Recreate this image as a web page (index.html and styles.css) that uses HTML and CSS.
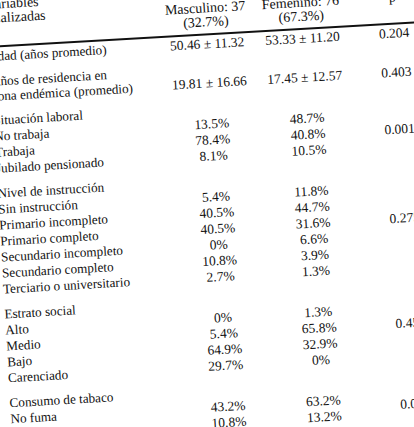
FILE: index.html
```html
<!DOCTYPE html>
<html>
<head>
  <meta charset="utf-8">
  <title>Variables analizadas por sexo</title>
  <link rel="stylesheet" href="styles.css">
</head>
<body>
  <div class="sheet">
    <div class="row head">
      <div class="label">Variables<br>analizadas</div>
      <div class="col">Masculino: 37<br>(32.7%)</div>
      <div class="col">Femenino: 76<br>(67.3%)</div>
      <div class="pcol">p</div>
    </div>

    <div class="row group first">
      <div class="label">Edad (años promedio)</div>
      <div class="col num">50.46 ± 11.32</div>
      <div class="col num">53.33 ± 11.20</div>
      <div class="pcol num">0.204</div>
    </div>

    <div class="row group two-line">
      <div class="label">Años de residencia en<br>zona endémica (promedio)</div>
      <div class="col num">19.81 ± 16.66</div>
      <div class="col num">17.45 ± 12.57</div>
      <div class="pcol num">0.403</div>
    </div>

    <div class="row group">
      <div class="label">
        <span>Situación laboral</span>
        <span>No trabaja</span>
        <span>Trabaja</span>
        <span>Jubilado pensionado</span>
      </div>
      <div class="col num list">
        <span>13.5%</span>
        <span>78.4%</span>
        <span>8.1%</span>
      </div>
      <div class="col num list">
        <span>48.7%</span>
        <span>40.8%</span>
        <span>10.5%</span>
      </div>
      <div class="pcol num low">0.0017</div>
    </div>

    <div class="row group">
      <div class="label">
        <span>Nivel de instrucción</span>
        <span>Sin instrucción</span>
        <span>Primario incompleto</span>
        <span>Primario completo</span>
        <span>Secundario incompleto</span>
        <span>Secundario completo</span>
        <span>Terciario o universitario</span>
      </div>
      <div class="col num list">
        <span>5.4%</span>
        <span>40.5%</span>
        <span>40.5%</span>
        <span>0%</span>
        <span>10.8%</span>
        <span>2.7%</span>
      </div>
      <div class="col num list">
        <span>11.8%</span>
        <span>44.7%</span>
        <span>31.6%</span>
        <span>6.6%</span>
        <span>3.9%</span>
        <span>1.3%</span>
      </div>
      <div class="pcol num">0.275</div>
    </div>

    <div class="row group">
      <div class="label">
        <span>Estrato social</span>
        <span>Alto</span>
        <span>Medio</span>
        <span>Bajo</span>
        <span>Carenciado</span>
      </div>
      <div class="col num list">
        <span>0%</span>
        <span>5.4%</span>
        <span>64.9%</span>
        <span>29.7%</span>
      </div>
      <div class="col num list">
        <span>1.3%</span>
        <span>65.8%</span>
        <span>32.9%</span>
        <span>0%</span>
      </div>
      <div class="pcol num">0.45</div>
    </div>

    <div class="row group">
      <div class="label">
        <span>Consumo de tabaco</span>
        <span>No fuma</span>
        <span>Fuma</span>
        <span>Ex fumador</span>
      </div>
      <div class="col num list">
        <span>43.2%</span>
        <span>10.8%</span>
        <span>45.9%</span>
      </div>
      <div class="col num list">
        <span>63.2%</span>
        <span>13.2%</span>
        <span>23.7%</span>
      </div>
      <div class="pcol num">0.06</div>
    </div>
  </div>
</body>
</html>
```

FILE: styles.css
```css
html, body {
  margin: 0;
  background-color: #ffffff;
}

body {
  width: 414px;
  height: 427px;
  overflow: hidden;
  font-family: 'Liberation Serif', 'Times New Roman', serif;
  font-size: 13.2px;
  color: #111111;
}

/* the photographed page sits slightly tilted */
.sheet {
  width: 470px;
  margin: -5px 0 0 -14px;
  transform: rotate(-3.3deg);
  transform-origin: 0 0;
}

.row {
  display: grid;
  grid-template-columns: 171px 94px 97px 1fr;
}

.head {
  height: 53px;
  box-sizing: border-box;
  padding: 3px 0 4px;
  border-bottom: 2px solid #111111;
  line-height: 14px;
  font-size: 14px;
}

.head .col,
.head .pcol {
  align-self: end;
}

.head .pcol {
  padding: 0 0 14px 40px;
}

.group {
  margin-top: 9px;
  line-height: 16px;
}

.group.first {
  margin-top: 1px;
}

.label,
.list {
  display: flex;
  flex-direction: column;
}

.col {
  text-align: center;
  white-space: nowrap;
}

.num {
  font-size: 13.5px;
}

.list {
  padding-top: 16px;
}

.pcol {
  padding-left: 28px;
  white-space: nowrap;
}

.group .pcol {
  align-self: center;
}

.group .pcol.low {
  padding-top: 16px;
}

.two-line .label {
  line-height: 15px;
}

.two-line .col,
.two-line .pcol {
  align-self: end;
}
```
